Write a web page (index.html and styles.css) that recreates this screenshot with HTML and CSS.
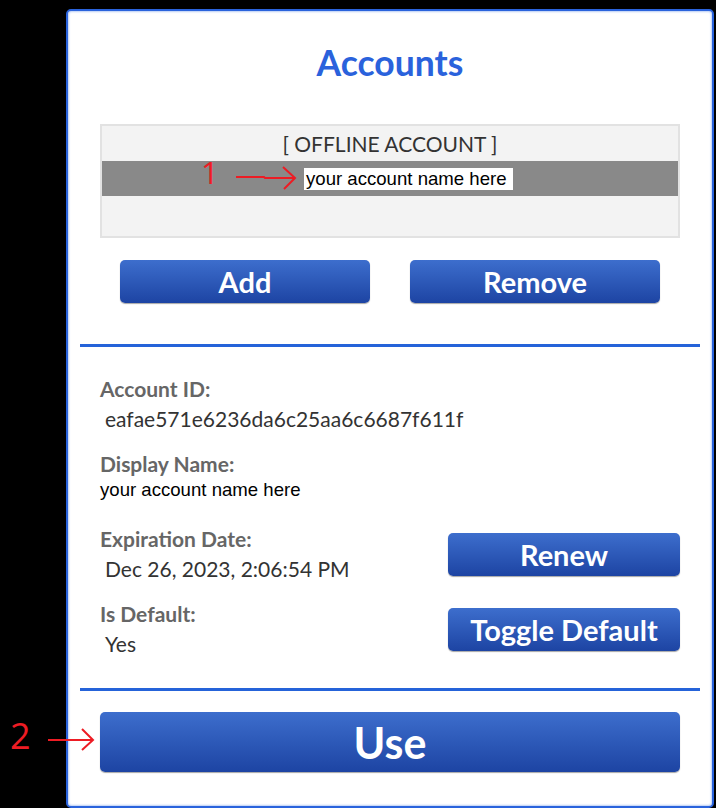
FILE: index.html
```html
<!DOCTYPE html>
<html>
<head>
<meta charset="utf-8">
<title>Accounts</title>
<link rel="stylesheet" href="styles.css">
</head>
<body>
<div class="panel">
  <h1 class="title">Accounts</h1>
  <div class="list">
    <div class="list-head">[ OFFLINE ACCOUNT ]</div>
    <div class="list-row selected"><span class="name-edit">your account name here</span></div>
  </div>
  <div class="actions">
    <button class="btn">Add</button>
    <button class="btn">Remove</button>
  </div>
  <div class="divider"></div>
  <div class="details">
    <div class="field">
      <div class="label">Account ID:</div>
      <div class="value">eafae571e6236da6c25aa6c6687f611f</div>
    </div>
    <div class="field field-name">
      <div class="label">Display Name:</div>
      <div class="value value-edit">your account name here</div>
    </div>
    <div class="field-row field-exp">
      <div class="field">
        <div class="label">Expiration Date:</div>
        <div class="value">Dec 26, 2023, 2:06:54 PM</div>
      </div>
      <button class="btn btn-side">Renew</button>
    </div>
    <div class="field-row field-def">
      <div class="field">
        <div class="label">Is Default:</div>
        <div class="value">Yes</div>
      </div>
      <button class="btn btn-side">Toggle Default</button>
    </div>
  </div>
  <div class="divider divider-2"></div>
  <button class="btn btn-use">Use</button>
</div>

<div class="note note-1">1</div>
<svg class="arrow arrow-1" width="70" height="30" viewBox="0 0 70 30">
  <path d="M2 14 L30 14 L31 15 L61 15" fill="none" stroke="#ed1c24" stroke-width="2"/>
  <path d="M49 4 L61 15 L50 26" fill="none" stroke="#ed1c24" stroke-width="2"/>
</svg>
<div class="note note-2">2</div>
<svg class="arrow arrow-2" width="52" height="26" viewBox="0 0 52 26">
  <path d="M1 13 L46 13" fill="none" stroke="#ed1c24" stroke-width="2"/>
  <path d="M35 2 L46 13 L35 23" fill="none" stroke="#ed1c24" stroke-width="2"/>
</svg>
</body>
</html>
```
FILE: styles.css
```css
html, body {
  margin: 0;
  padding: 0;
  background: #000;
  width: 716px;
  height: 808px;
  overflow: hidden;
  position: relative;
}

.panel {
  box-sizing: border-box;
  margin: 9px 0 0 66px;
  width: 648px;
  border: 2px solid #2a63dc;
  border-radius: 5px;
  background: #fff;
  box-shadow: inset 0 0 2px 1px #b9cdf4;
  padding: 31px 32px 34px;
  font-family: Lato, "Open Sans", sans-serif;
}

.title {
  margin: 0;
  text-align: center;
  font-size: 35.5px;
  line-height: 42px;
  font-weight: 700;
  color: #2a62dc;
}

.list {
  margin-top: 40px;
  border: 2px solid #e2e2e2;
  background: #f3f3f3;
  padding-bottom: 40px;
}

.list-head {
  height: 35px;
  line-height: 35px;
  text-align: center;
  font-size: 21px;
  color: #333;
}

.list-row {
  height: 35px;
  display: flex;
  align-items: center;
}

.selected {
  background: #898989;
  padding-left: 202px;
}

.name-edit {
  background: #fff;
  color: #000;
  font-family: "Liberation Sans", Arial, sans-serif;
  font-size: 18.6px;
  line-height: 22px;
  padding: 0 0 0 2px;
  width: 209px;
  box-sizing: border-box;
  white-space: nowrap;
}

.actions {
  display: flex;
  gap: 40px;
  padding: 0 20px;
  margin-top: 22px;
}

.btn {
  flex: 1;
  height: 43px;
  border: none;
  border-radius: 5px;
  background: linear-gradient(#3d6ecd, #1d44a3);
  box-shadow: 0 1px 1px rgba(0, 0, 0, 0.35);
  color: #fff;
  font-family: Lato, "Open Sans", sans-serif;
  font-weight: 700;
  font-size: 29px;
  padding: 0;
  cursor: pointer;
}

.divider {
  height: 3px;
  background: #2563d9;
  margin: 41px -20px 0;
}

.details {
  padding-top: 27px;
}

.field {
  display: flex;
  flex-direction: column;
}

.field-name {
  margin-top: 15px;
}

.label {
  font-size: 21px;
  line-height: 30px;
  font-weight: 700;
  color: #666;
}

.value {
  font-size: 21px;
  line-height: 30px;
  color: #333;
  padding-left: 5px;
}

.value-edit {
  font-family: "Liberation Sans", Arial, sans-serif;
  font-size: 18.6px;
  line-height: 22px;
  color: #000;
  padding-left: 0;
}

.field-row {
  display: flex;
  justify-content: space-between;
  align-items: center;
}

.field-exp {
  margin-top: 23px;
}

.field-def {
  margin-top: 15px;
}

.btn-side {
  flex: none;
  width: 232px;
}

.divider-2 {
  margin-top: 29px;
}

.btn-use {
  display: block;
  width: 100%;
  height: 60px;
  margin-top: 21px;
  font-size: 43px;
}

.note {
  position: absolute;
  color: #ed1c24;
  font-family: "Open Sans", sans-serif;
  font-weight: 400;
}

.note-1 {
  left: 201px;
  top: 152px;
  font-size: 31px;
  line-height: 40px;
}

.note-2 {
  left: 10px;
  top: 714px;
  font-size: 36px;
  line-height: 44px;
}

.arrow {
  position: absolute;
}

.arrow-1 {
  left: 234px;
  top: 163px;
}

.arrow-2 {
  left: 47px;
  top: 727px;
}
```
